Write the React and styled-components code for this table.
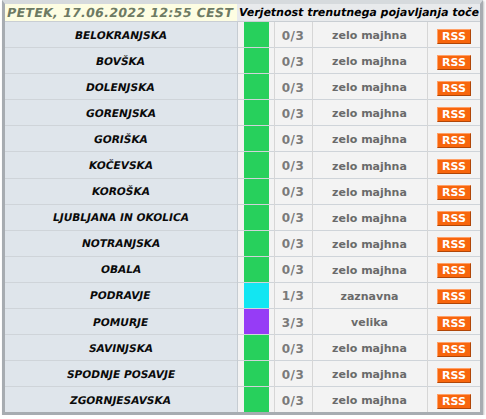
import React from 'react'
import styled, { createGlobalStyle } from 'styled-components'

const GlobalStyle = createGlobalStyle`
  html, body {
    margin: 0;
    padding: 0;
    background: #ffffff;
  }
  body {
    font-family: 'DejaVu Sans', Verdana, sans-serif;
  }
`

const regions = [
  { name: 'BELOKRANJSKA', level: 0 },
  { name: 'BOVŠKA', level: 0 },
  { name: 'DOLENJSKA', level: 0 },
  { name: 'GORENJSKA', level: 0 },
  { name: 'GORIŠKA', level: 0 },
  { name: 'KOČEVSKA', level: 0 },
  { name: 'KOROŠKA', level: 0 },
  { name: 'LJUBLJANA IN OKOLICA', level: 0 },
  { name: 'NOTRANJSKA', level: 0 },
  { name: 'OBALA', level: 0 },
  { name: 'PODRAVJE', level: 1 },
  { name: 'POMURJE', level: 3 },
  { name: 'SAVINJSKA', level: 0 },
  { name: 'SPODNJE POSAVJE', level: 0 },
  { name: 'ZGORNJESAVSKA', level: 0 },
]

const levels = {
  0: { color: '#27d05c', label: 'zelo majhna' },
  1: { color: '#12e6f2', label: 'zaznavna' },
  2: { color: '#f2e612', label: 'zmerna' },
  3: { color: '#963cf6', label: 'velika' },
}

// name, swatch, value, label, rss
const colWidths = [232, 37, 38, 115, 53]

const Frame = styled.div`
  width: 475px;
  margin: 0 2px;
  border: 3px solid #a7acb1;
  border-top: 4px solid #d6dadd;
  box-shadow: 1px 1px 2px rgba(0, 0, 0, 0.25);
  background: #f2f2f2;
`

const Table = styled.table`
  width: 100%;
  border-collapse: collapse;
  table-layout: fixed;
`

const Col = styled.col`
  width: ${(p) => p.w}px;
`

// the installed DejaVu has no oblique face, so slant the text by hand
const Slant = styled.span`
  display: inline-block;
  transform: skewX(-11deg);
`

const Head = styled.th`
  height: 17px;
  padding: 0 1px 0 2px;
  font-weight: bold;
  white-space: nowrap;
  overflow: hidden;
  text-align: left;
  font-size: ${(p) => (p.date ? '12.5px' : '11px')};
  letter-spacing: ${(p) => (p.date ? '0.35px' : '0')};
  color: ${(p) => (p.date ? '#6d7a63' : '#000000')};
  background: ${(p) => (p.date ? '#fdfde2' : '#e8eaec')};
  border-bottom: 1px solid #c9ced3;
`

const Row = styled.tr`
  border-top: 1px solid #cfd4d9;
`

const NameCell = styled.td`
  padding: 0 2px;
  background: #dfe5eb;
  border-right: 1px solid #c6ccd2;
  font-size: 10.6px;
  font-weight: bold;
  color: #0a0a0a;
  text-align: center;
  white-space: nowrap;
`

const SwatchCell = styled.td`
  padding: 0 5px 0 6px;
  border-right: 1px solid #d6d6d6;
  background: #f3f3f3;
`

const Swatch = styled.div`
  height: 25.1px;
  background: ${(p) => p.color};
`

const ValueCell = styled.td`
  padding: 2px 0 0;
  text-align: center;
  border-right: 1px solid #d6d6d6;
  background: #f3f3f3;
  font-size: 12px;
  font-weight: bold;
  letter-spacing: 0.5px;
  color: #7a7a7a;
`

const LabelCell = styled.td`
  padding: 2px 0 0;
  text-align: center;
  border-right: 1px solid #d6d6d6;
  background: #f3f3f3;
  font-size: 11px;
  font-weight: bold;
  color: #6a6a6a;
`

const RssCell = styled.td`
  padding: 3px 9px 0 0;
  text-align: right;
  background: #f3f3f3;
  line-height: 15px;
`

const Rss = styled.span`
  display: inline-block;
  width: 32px;
  height: 13px;
  line-height: 13px;
  background: #f8660d;
  border: 1px solid;
  border-color: #ffa067 #b04608 #b04608 #ffa067;
  color: #ffffff;
  font-size: 11px;
  font-weight: bold;
  text-align: center;
  vertical-align: top;
`

const App = () => (
  <>
    <GlobalStyle />
    <Frame>
      <Table>
        <colgroup>
          {colWidths.map((w, i) => (
            <Col key={i} w={w} />
          ))}
        </colgroup>
        <thead>
          <tr>
            <Head date>
              <Slant>PETEK, 17.06.2022 12:55 CEST</Slant>
            </Head>
            <Head colSpan={4}>
              <Slant>Verjetnost trenutnega pojavljanja toče</Slant>
            </Head>
          </tr>
        </thead>
        <tbody>
          {regions.map((r) => (
            <Row key={r.name}>
              <NameCell>
                <Slant>{r.name}</Slant>
              </NameCell>
              <SwatchCell>
                <Swatch color={levels[r.level].color} />
              </SwatchCell>
              <ValueCell>{r.level}/3</ValueCell>
              <LabelCell>{levels[r.level].label}</LabelCell>
              <RssCell>
                <Rss>RSS</Rss>
              </RssCell>
            </Row>
          ))}
        </tbody>
      </Table>
    </Frame>
  </>
)

export default App
